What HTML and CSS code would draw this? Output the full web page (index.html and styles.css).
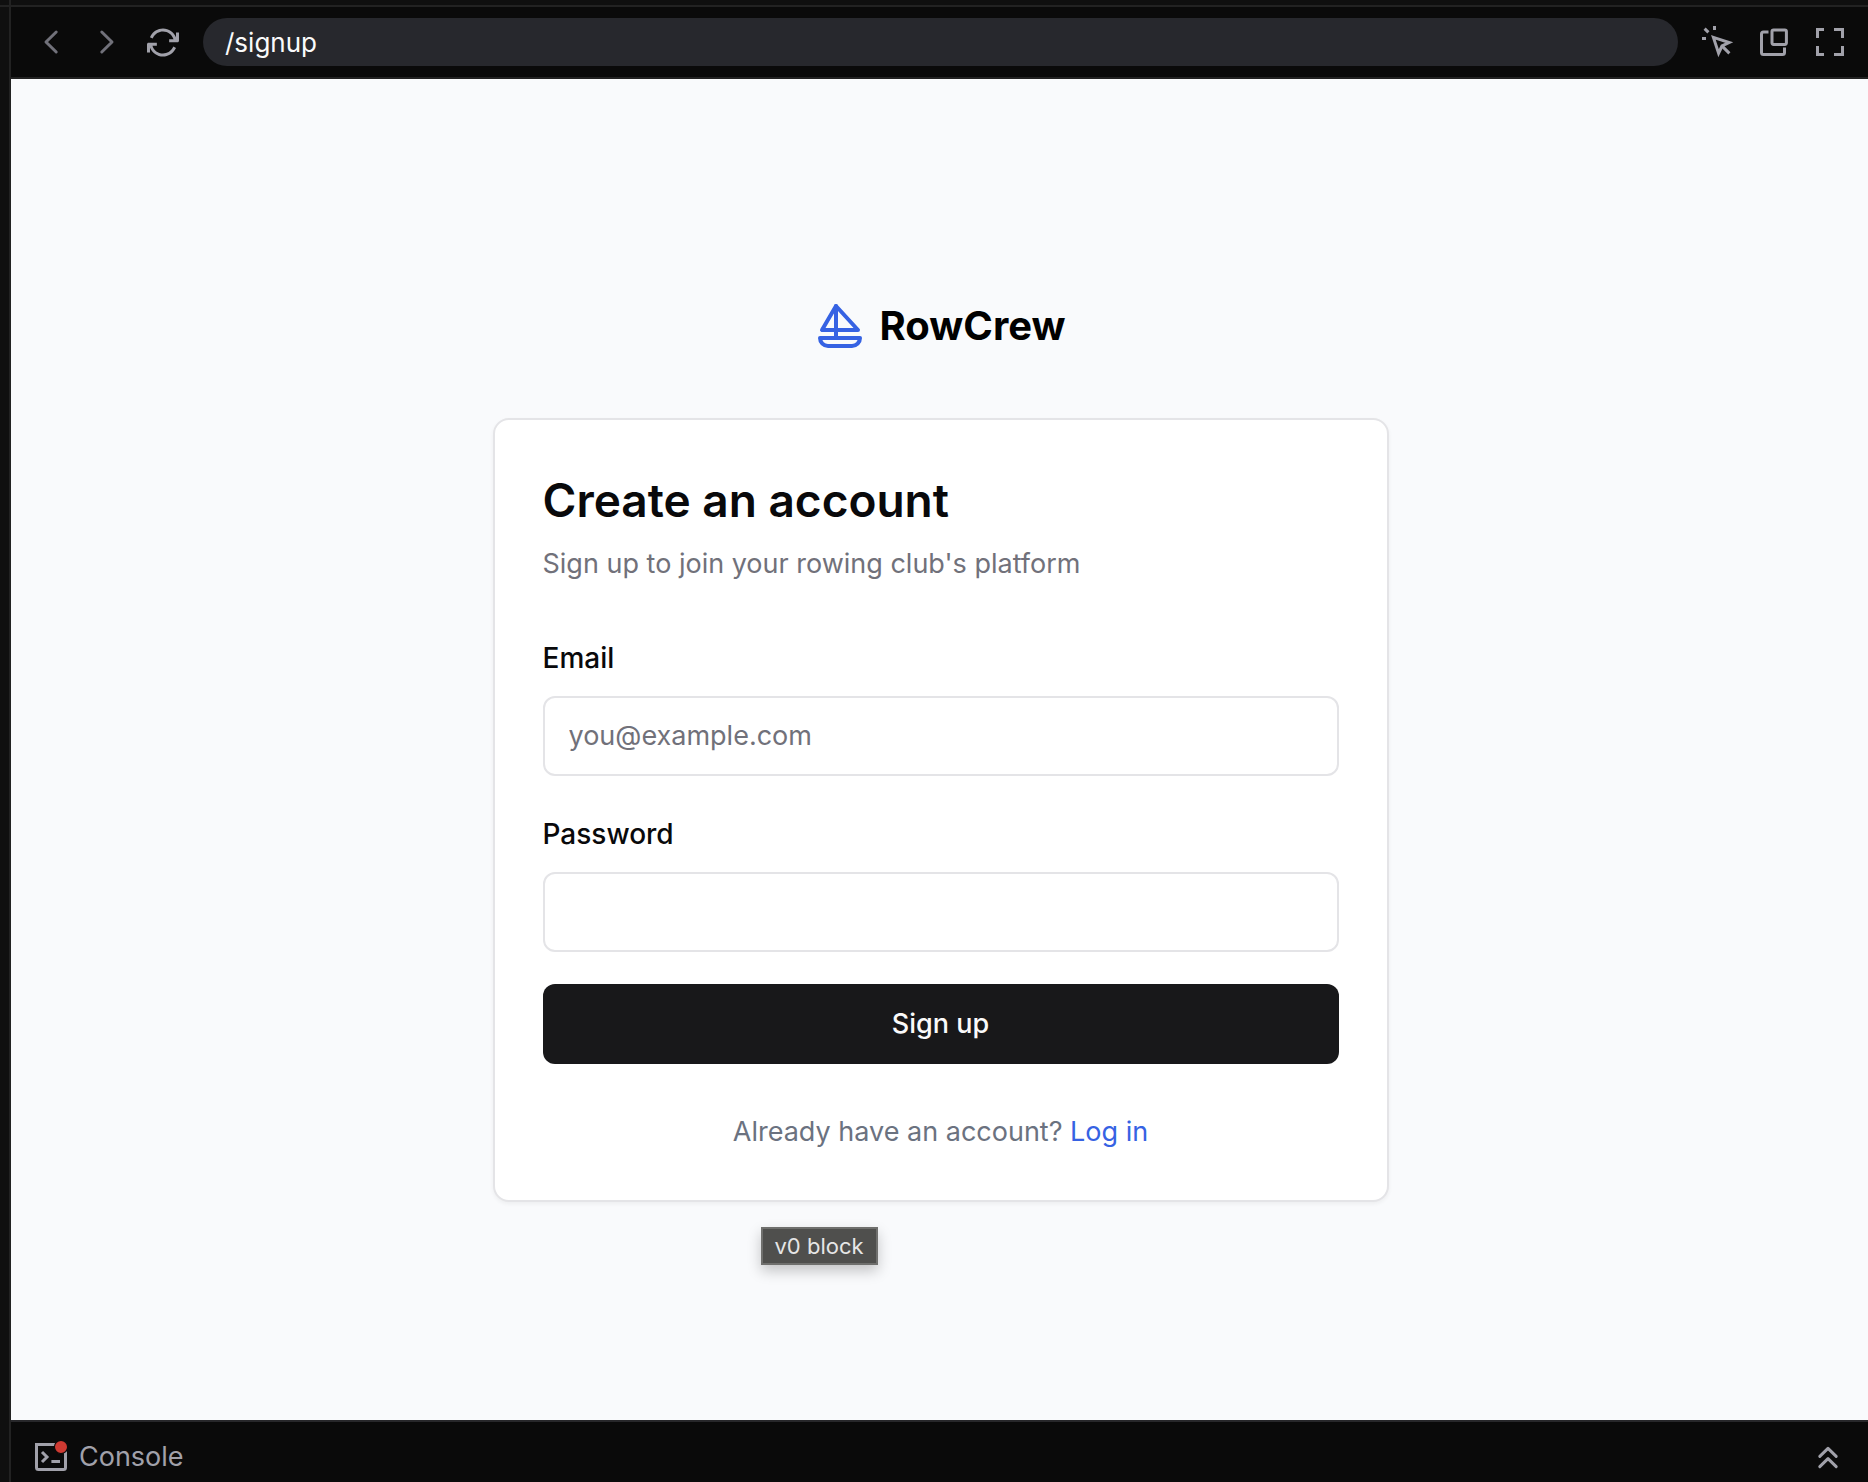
FILE: index.html
```html
<!DOCTYPE html>
<html lang="en">
<head>
<meta charset="utf-8">
<meta name="viewport" content="width=device-width, initial-scale=1">
<title>RowCrew – Create an account</title>
<link rel="stylesheet" href="styles.css">
</head>
<body>
<div class="workspace">
  <div class="preview">
    <header class="toolbar">
      <button class="icon-button icon-button-dim" type="button" aria-label="Back">
        <svg class="icon" viewBox="0 0 16 16" fill="none" stroke="currentColor" stroke-width="1.5" stroke-linecap="round" stroke-linejoin="round"><path d="M10.6 3 5.5 8l5.100 5"/></svg>
      </button>
      <button class="icon-button icon-button-dim" type="button" aria-label="Forward">
        <svg class="icon" viewBox="0 0 16 16" fill="none" stroke="currentColor" stroke-width="1.5" stroke-linecap="round" stroke-linejoin="round"><path d="M5.400 3 10.500 8l-5.100 5"/></svg>
      </button>
      <button class="icon-button" type="button" aria-label="Refresh">
        <svg class="icon" viewBox="0 0 16 16" fill="currentColor"><path fill-rule="evenodd" d="M8 1.250C5.337 1.250 3.023 2.737 1.840 4.922L1.483 5.581 2.803 6.295 3.160 5.636C4.091 3.916 5.910 2.750 8 2.750C10.490 2.750 12.594 4.405 13.271 6.675H11.074V8.175H15.249C15.663 8.175 15.999 7.839 15.999 7.425V3.250H14.499V5.645C13.465 3.069 10.946 1.250 8 1.250ZM1.501 10.855V13.250H.001V9.075C.001 8.661.337 8.325.751 8.325H4.926V9.825H2.729C3.406 12.095 5.510 13.750 8 13.750C10.080 13.750 11.891 12.596 12.827 10.890L13.187 10.232 14.502 10.953 14.142 11.610C12.954 13.778 10.649 15.250 8 15.250C5.055 15.250 2.535 13.431 1.501 10.855Z"/></svg>
      </button>
      <input class="address" type="text" value="/signup" aria-label="Address">
      <button class="icon-button" type="button" aria-label="Select element">
        <svg class="icon" viewBox="0 0 16 16" fill="none" stroke="currentColor" stroke-width="1.5"><path d="M5.700 5.700 13.600 8.300 10 10 8.300 13.600Z"/><path d="M10.200 10.200 13.700 13.700M6.250 0V2M0 6.250H2M1.300 1.300 3.200 3.200"/></svg>
      </button>
      <button class="icon-button" type="button" aria-label="Open in window">
        <svg class="icon" viewBox="0 0 16 16" fill="none" stroke="currentColor" stroke-width="1.500"><rect x="7" y="2" width="7.200" height="7.200" rx=".8"/><path d="M5.250 3H2.750a1 1 0 0 0-1 1v9.250a1 1 0 0 0 1 1H12.250a1 1 0 0 0 1-1V10.700"/></svg>
      </button>
      <button class="icon-button" type="button" aria-label="Fullscreen">
        <svg class="icon" viewBox="0 0 16 16" fill="none" stroke="currentColor" stroke-width="1.500"><path d="M1.750 6V1.750H5M10 1.750h4.250V6M14.250 10v4.250H10M5 14.250H1.750V10"/></svg>
      </button>
    </header>

    <main class="page">
      <div class="brand">
        <svg class="brand-icon" viewBox="0 0 24 24" fill="none" stroke="currentColor" stroke-width="2" stroke-linecap="round" stroke-linejoin="round" aria-hidden="true"><path d="M22 18H2a4 4 0 0 0 4 4h12a4 4 0 0 0 4-4Z"/><path d="M21 14 10 2 3 14h18Z"/><path d="M10 2v16"/></svg>
        <span class="brand-name">RowCrew</span>
      </div>
      <section class="card">
        <h1 class="card-title">Create an account</h1>
        <p class="card-description">Sign up to join your rowing club's platform</p>
        <form class="form">
          <div class="field">
            <label class="field-label" for="email">Email</label>
            <input class="field-input" id="email" type="email" placeholder="you@example.com">
          </div>
          <div class="field">
            <label class="field-label" for="password">Password</label>
            <input class="field-input" id="password" type="password">
          </div>
          <button class="submit" type="submit">Sign up</button>
        </form>
        <p class="card-footer">Already have an account? <a class="link" href="#login">Log in</a></p>
        <div class="tooltip" role="tooltip">v0 block</div>
      </section>
    </main>

    <footer class="console">
      <button class="console-toggle" type="button">
        <svg class="icon" viewBox="0 0 16 16" fill="none" stroke="currentColor" stroke-width="1.500" aria-hidden="true"><path d="M.75 1.750H15.250V13.250a1 1 0 0 1-1 1H1.750a1 1 0 0 1-1-1Z"/><path d="M3.500 5.500 6 8 3.500 10.500M8.200 10.300h4.300"/><circle class="alert-dot" cx="13" cy="3" r="3.300"/></svg>
        Console
      </button>
      <button class="icon-button" type="button" aria-label="Expand console">
        <svg class="icon" viewBox="0 0 16 16" fill="none" stroke="currentColor" stroke-width="1.500" stroke-linecap="round" stroke-linejoin="round"><path d="M3.900 7.700 8 3.700l4.100 4M3.900 12.800 8 8.800l4.100 4"/></svg>
      </button>
    </footer>
  </div>
</div>
</body>
</html>
```

FILE: styles.css
```css
* {
  box-sizing: border-box;
}

body {
  margin: 0;
  background: #0f0f0f;
  font-family: Inter, "Liberation Sans", sans-serif;
  font-size: 27px;
  line-height: 40px;
}

button,
input {
  font: inherit;
}

.workspace {
  display: flex;
  flex-direction: column;
  min-height: 100vh;
  padding: 5px 0 0 9px;
  position: relative;
}

/* Divider that runs across the panel and its left gutter */
.workspace::before {
  content: "";
  position: absolute;
  inset: 5px 0 auto 0;
  height: 2px;
  background: #222222;
}

.workspace::after {
  content: "";
  position: absolute;
  inset: 0 auto 0 9px;
  width: 2px;
  background: #222222;
}

.preview {
  flex: 1;
  display: flex;
  flex-direction: column;
  padding: 2px 0 0 2px;
  background: #0a0a0a;
}

.toolbar {
  display: flex;
  align-items: center;
  gap: 24px;
  height: 72px;
  padding: 0 22px 0 24px;
  border-bottom: 2px solid #222222;
}

.icon-button {
  flex: none;
  display: flex;
  padding: 0;
  border: 0;
  background: none;
  color: #a1a1aa;
}

.icon-button-dim {
  color: #71717a;
}

.icon {
  display: block;
  width: 32px;
  height: 32px;
}

.address {
  flex: 1;
  min-width: 0;
  height: 48px;
  padding: 0 22px;
  border: 0;
  border-radius: 24px;
  background: #27282d;
  color: #fafafa;
  font-size: 26px;
}

.page {
  flex: 1;
  display: flex;
  flex-direction: column;
  align-items: center;
  justify-content: center;
  gap: 64px;
  padding: 32px 0 32px 2px;
  background: #f9fafc;
}

.brand {
  display: flex;
  align-items: center;
  gap: 16px;
}

.brand-icon {
  width: 48px;
  height: 48px;
  color: #3662e3;
}

.brand-name {
  color: #000000;
  font-size: 40px;
  font-weight: 700;
  line-height: 56px;
}

.card {
  position: relative;
  width: 100%;
  max-width: 896px;
  padding: 48px;
  border: 2px solid #e4e4e7;
  border-radius: 16px;
  background: #ffffff;
  box-shadow: 0 2px 4px rgba(0, 0, 0, 0.05);
}

.card-title {
  margin: 0;
  color: #09090b;
  font-size: 46px;
  font-weight: 600;
  line-height: 64px;
}

.card-description {
  margin: 12px 0 48px;
  color: #71717a;
}

.form {
  display: flex;
  flex-direction: column;
  gap: 32px;
}

.field {
  display: flex;
  flex-direction: column;
  gap: 12px;
}

.field-label {
  color: #09090b;
  font-size: 28px;
  font-weight: 500;
  line-height: 52px;
}

.field-input {
  width: 100%;
  height: 80px;
  padding: 0 24px;
  border: 2px solid #e4e4e7;
  border-radius: 12px;
  background: #ffffff;
  color: #09090b;
}

.field-input::placeholder {
  color: #71717a;
  opacity: 1;
}

.submit {
  height: 80px;
  border: 0;
  border-radius: 12px;
  background: #18181a;
  color: #fafafa;
  font-weight: 500;
}

.card-footer {
  margin: 48px 0 0;
  color: #6b7280;
  text-align: center;
}

.link {
  color: #3662e3;
  text-decoration: none;
}

.tooltip {
  position: absolute;
  top: calc(100% + 27px);
  left: 266px;
  padding: 0 12px;
  border: 2px solid #6f6f6d;
  background: #4f4f4d;
  box-shadow: 0 6px 14px rgba(0, 0, 0, 0.22);
  color: #e6e6e6;
  font-size: 22px;
  line-height: 34px;
}

.console {
  display: flex;
  align-items: center;
  justify-content: space-between;
  padding: 19px 24px 9px;
  border-top: 2px solid #27272a;
}

.console-toggle {
  display: flex;
  align-items: center;
  gap: 12px;
  height: 32px;
  padding: 0;
  border: 0;
  background: none;
  color: #a1a1aa;
}

.alert-dot {
  fill: #cf3a32;
  stroke: #0a0a0a;
  stroke-width: 0.6px;
}
```
